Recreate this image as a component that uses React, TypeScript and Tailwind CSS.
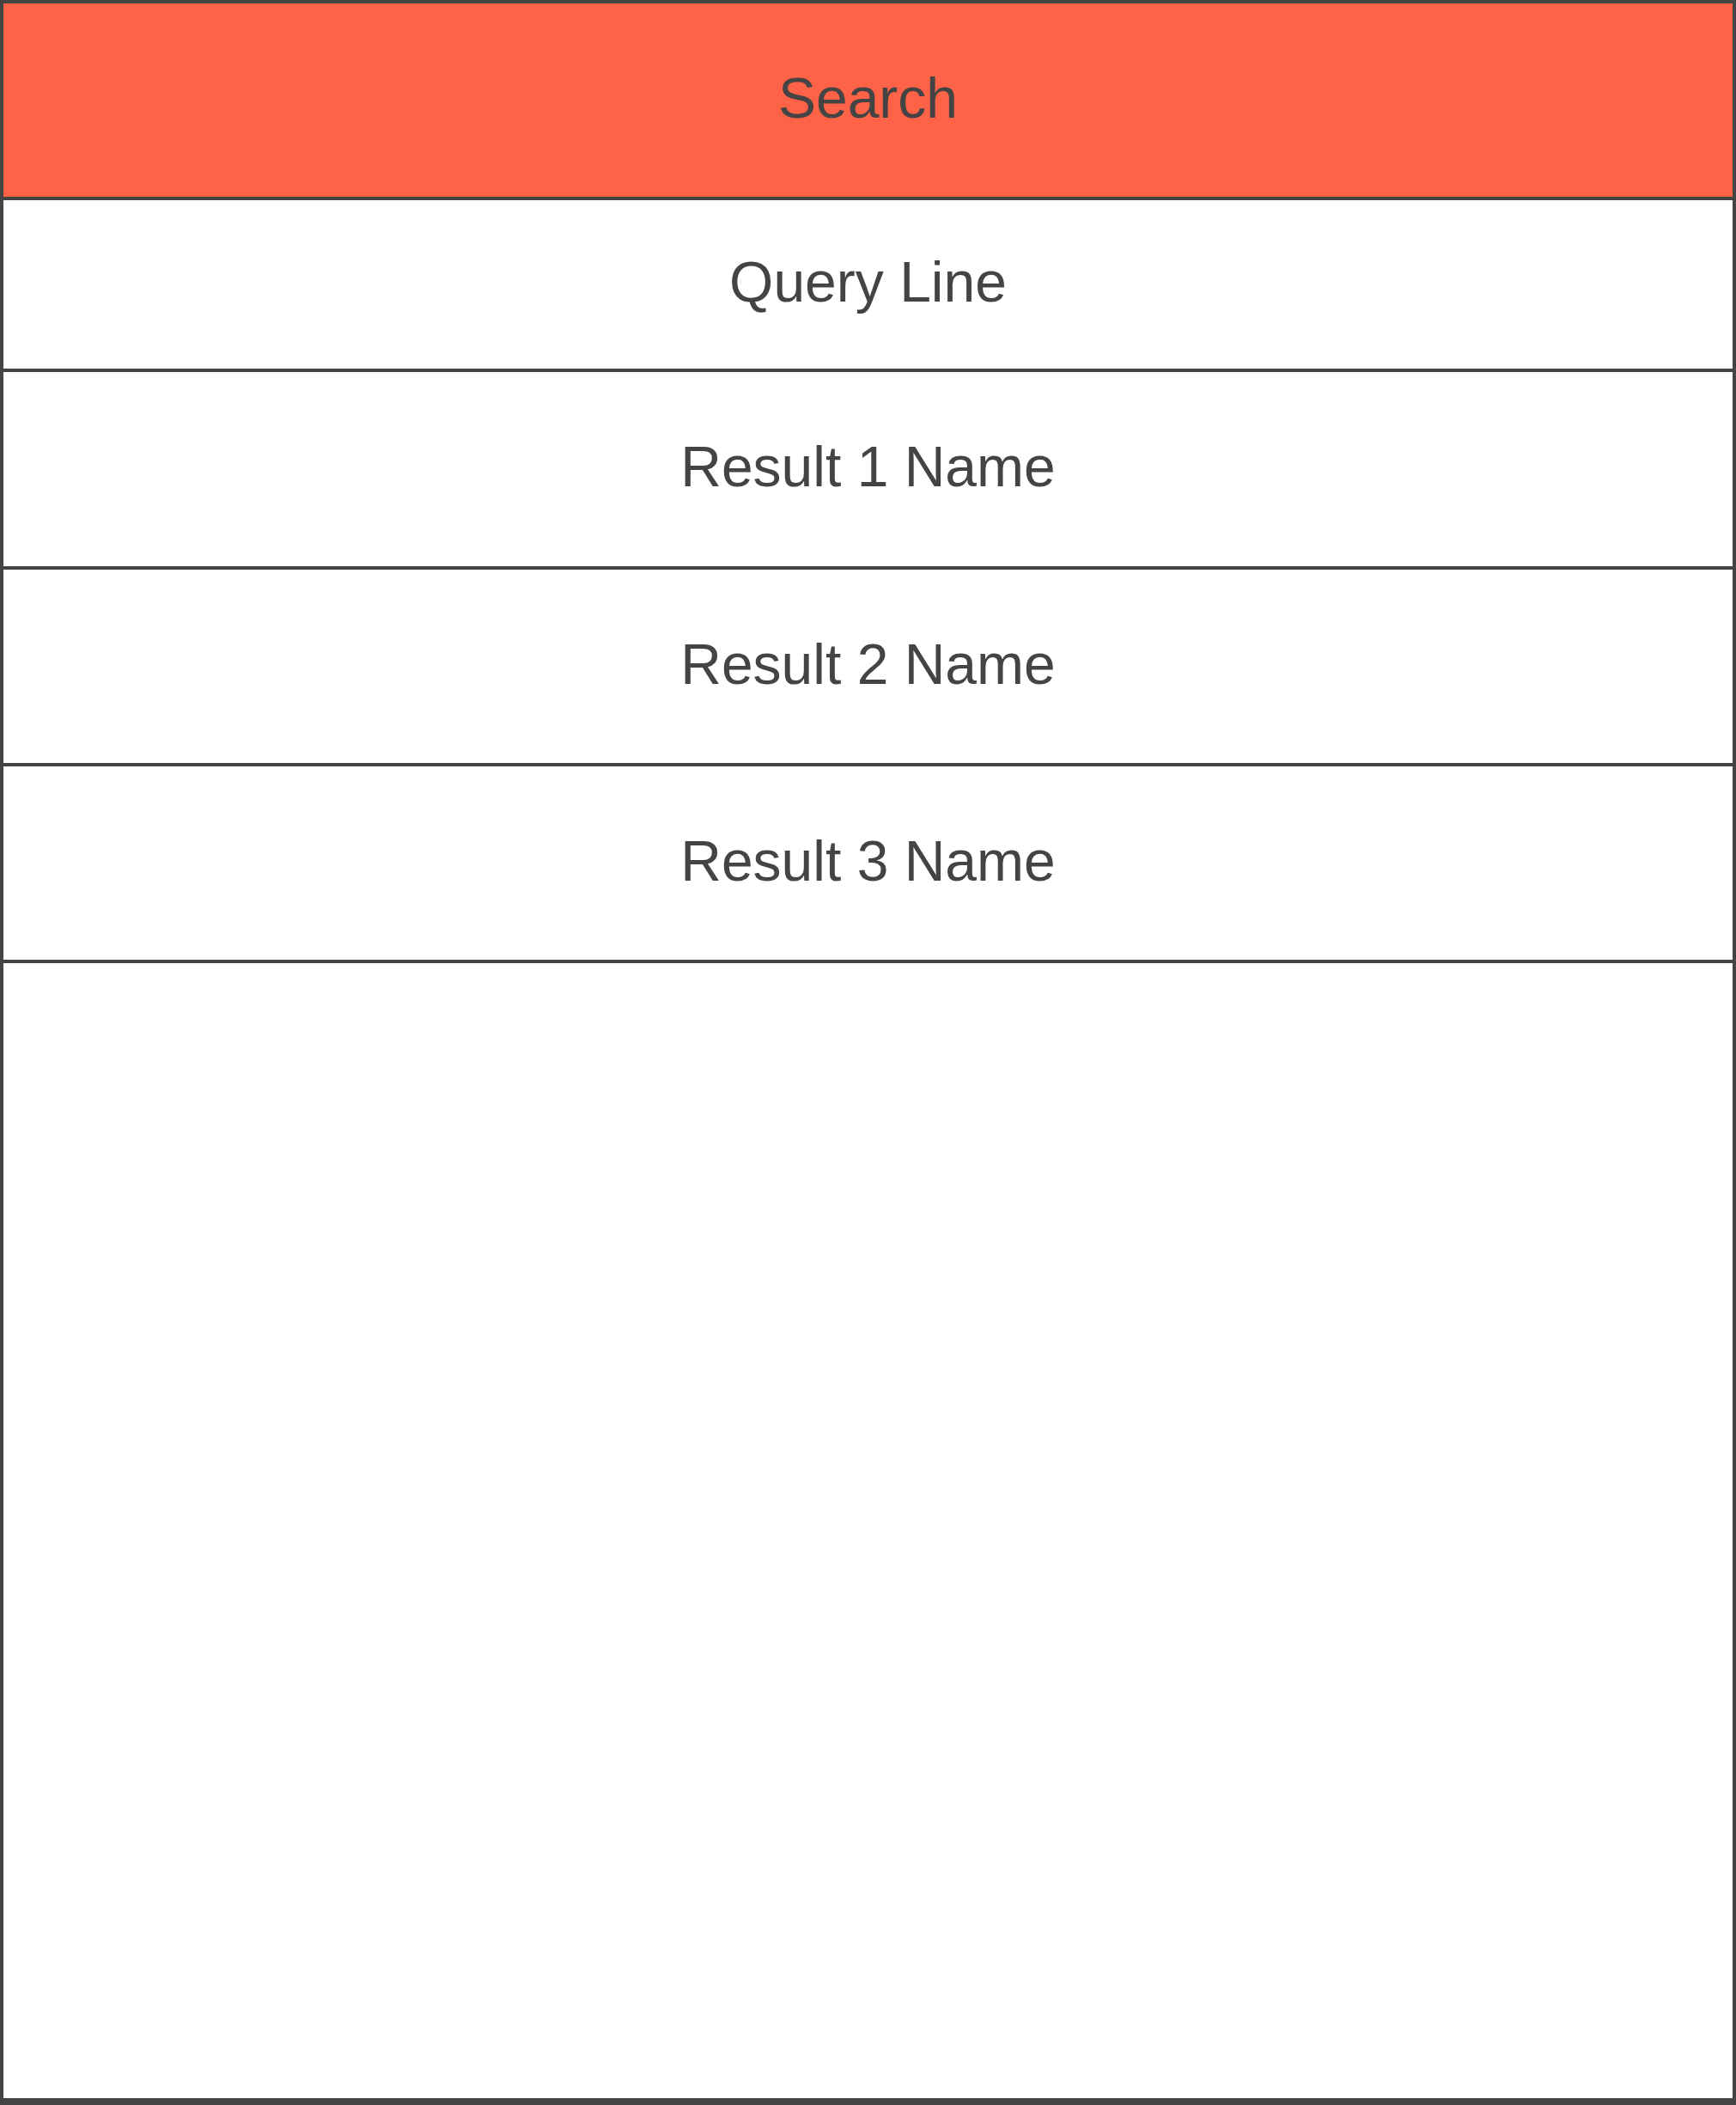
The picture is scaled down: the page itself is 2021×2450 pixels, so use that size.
import React from "react";

const rows = [
  { label: "Query Line", h: "h-[200px]" },
  { label: "Result 1 Name", h: "h-[230px]" },
  { label: "Result 2 Name", h: "h-[229px]" },
  { label: "Result 3 Name", h: "h-[229px]" },
];

export default function App() {
  return (
    <div
      className="w-[2021px] h-[2450px] flex flex-col border-4 border-b-[8px] border-[#444444] bg-white text-[#444444] text-[66px]"
      style={{ fontFamily: '"Liberation Sans", Arial, sans-serif' }}
    >
      <div className="h-[229px] shrink-0 flex items-center justify-center pb-[4px] bg-[#ff6347] border-b-4 border-[#444444]">
        Search
      </div>
      {rows.map((r) => (
        <div
          key={r.label}
          className={`${r.h} shrink-0 flex items-center justify-center pb-[5px] border-b-4 border-[#444444]`}
        >
          {r.label}
        </div>
      ))}
      <div className="flex-1" />
    </div>
  );
}
